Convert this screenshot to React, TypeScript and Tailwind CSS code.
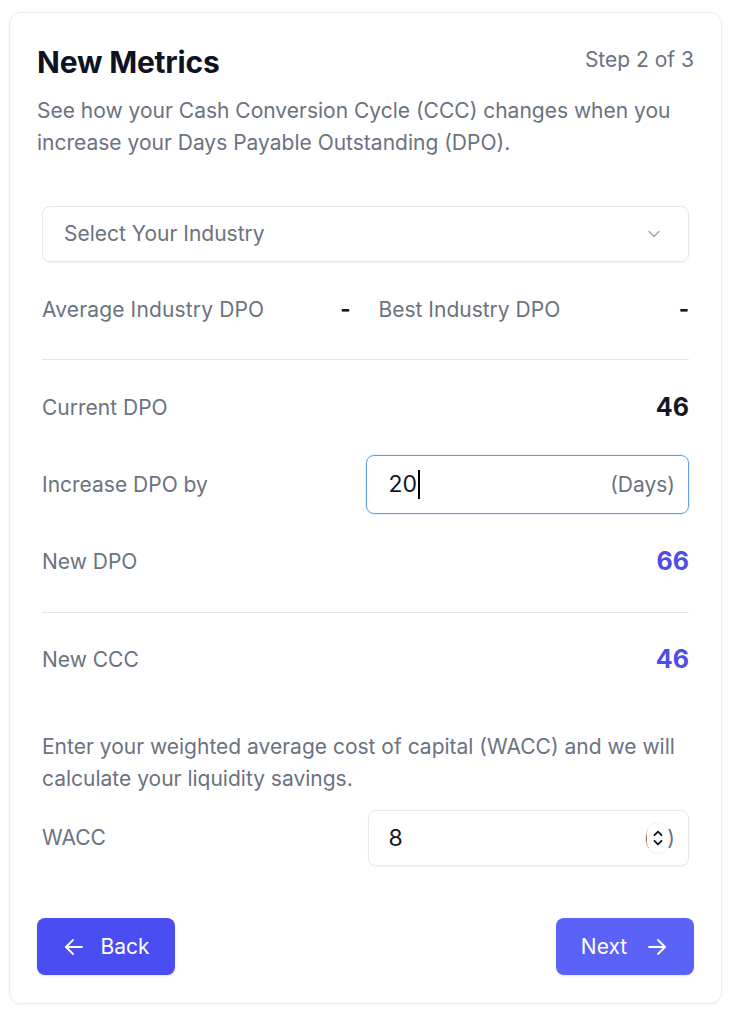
import React from "react";

const font = { fontFamily: "Inter, 'Noto Sans', sans-serif" };

function Row({ label, children }: { label: string; children: React.ReactNode }) {
  return (
    <div className="flex items-center justify-between">
      <span className="text-[21px] text-[#6b7280]">{label}</span>
      {children}
    </div>
  );
}

export default function App() {
  return (
    <div className="bg-white min-h-[1024px] pt-[12px] px-[9px]" style={font}>
      <div className="w-[713px] h-[992px] rounded-xl border border-[#eceef1] shadow-[0_1px_3px_rgba(0,0,0,0.05)] bg-white px-[27px] pt-[31px] flex flex-col">
        <div className="flex items-center justify-between">
          <h1 className="text-[30px] leading-[36px] font-bold text-[#0f1222] tracking-[-0.2px]">New Metrics</h1>
          <span className="text-[21px] text-[#6b7280] -mt-[4px]">Step 2 of 3</span>
        </div>
        <p className="mt-[15px] text-[21px] leading-[32px] text-[#6b7280]">
          See how your Cash Conversion Cycle (CCC) changes when you increase your Days Payable Outstanding (DPO).
        </p>

        <div className="px-[5px] mt-[47px] flex flex-col">
          <div className="h-[56px] rounded-lg border border-[#e5e7eb] shadow-[0_1px_2px_rgba(0,0,0,0.05)] flex items-center justify-between pl-[21px] pr-[24px]">
            <span className="text-[21px] text-[#6b7280]">Select Your Industry</span>
            <svg width="20" height="20" viewBox="0 0 24 24" fill="none" stroke="#9ca3af" strokeWidth="1.6" strokeLinecap="round" strokeLinejoin="round">
              <path d="M6 9l6 6 6-6" />
            </svg>
          </div>

          <div className="grid grid-cols-2 gap-x-[26px] mt-[31px] h-[30px] items-center">
            <div className="flex items-center justify-between">
              <span className="text-[21px] text-[#6b7280] tracking-[0.15px]">Average Industry DPO</span>
              <span className="text-[22px] font-bold text-[#111827] pr-[2px]">-</span>
            </div>
            <div className="flex items-center justify-between">
              <span className="text-[21px] text-[#6b7280]">Best Industry DPO</span>
              <span className="text-[22px] font-bold text-[#111827]">-</span>
            </div>
          </div>

          <div className="border-t border-[#e5e7eb] mt-[36px]" />

          <div className="mt-[33px] h-[30px] flex items-center">
            <div className="w-full">
              <Row label="Current DPO">
                <span className="text-[25px] font-bold text-[#111827]">46</span>
              </Row>
            </div>
          </div>

          <div className="grid grid-cols-2 items-center mt-[32px]">
            <span className="text-[21px] text-[#6b7280]">Increase DPO by</span>
            <div className="h-[59px] rounded-lg border-[1.5px] border-[#64a0e6] shadow-[0_0_0_1px_rgba(100,160,230,0.15)] flex items-center justify-between pl-[22px] pr-[13px]">
              <span className="flex items-center text-[23px] text-[#111827]">
                20<span className="inline-block w-[2px] h-[29px] bg-black ml-[1px]" />
              </span>
              <span className="text-[21px] text-[#6b7280]">(Days)</span>
            </div>
          </div>

          <div className="mt-[33px] h-[30px] flex items-center">
            <div className="w-full">
              <Row label="New DPO">
                <span className="text-[25px] font-bold text-[#4b4ee8]">66</span>
              </Row>
            </div>
          </div>

          <div className="border-t border-[#e5e7eb] mt-[35px]" />

          <div className="mt-[32px] h-[30px] flex items-center">
            <div className="w-full">
              <Row label="New CCC">
                <span className="text-[25px] font-bold text-[#4b4ee8]">46</span>
              </Row>
            </div>
          </div>

          <p className="mt-[56px] text-[21px] leading-[32px] text-[#6b7280]">
            Enter your weighted average cost of capital (WACC) and we will calculate your liquidity savings.
          </p>

          <div className="grid grid-cols-2 items-center mt-[15px]">
            <span className="text-[21px] text-[#6b7280]">WACC</span>
            <div className="ml-[2px] h-[56px] rounded-lg border border-[#e5e7eb] shadow-[0_1px_2px_rgba(0,0,0,0.05)] flex items-center justify-between pl-[20px] pr-[13px]">
              <span className="text-[23px] text-[#111827]">8</span>
              <span className="relative flex items-center text-[21px] text-[#6b7280]">
                (<span className="inline-block w-[16px]" />)
                <span className="absolute left-[3px] top-1/2 -translate-y-1/2 w-[22px] h-[30px] rounded-full bg-white shadow-[0_0_2px_rgba(0,0,0,0.15)] flex items-center justify-center">
                  <svg width="14" height="24" viewBox="0 0 12 20" fill="none" stroke="#111827" strokeWidth="1.6" strokeLinecap="round" strokeLinejoin="round">
                    <path d="M3 7.5l3-3 3 3" />
                    <path d="M3 12.5l3 3 3-3" />
                  </svg>
                </span>
              </span>
            </div>
          </div>
        </div>

        <div className="mt-[52px] flex items-center justify-between">
          <button className="h-[57px] w-[138px] rounded-lg bg-[#4a4df2] text-white text-[21px] flex items-center justify-center gap-[14px] shadow-[0_1px_2px_rgba(0,0,0,0.1)]">
            <svg width="24" height="24" viewBox="0 0 24 24" fill="none" stroke="white" strokeWidth="1.8" strokeLinecap="round" strokeLinejoin="round">
              <path d="M20 12H4" />
              <path d="M11 19l-7-7 7-7" />
            </svg>
            Back
          </button>
          <button className="h-[57px] w-[138px] rounded-lg bg-[#5b62f7] text-white text-[21px] flex items-center justify-center gap-[18px] shadow-[0_1px_2px_rgba(0,0,0,0.1)]">
            Next
            <svg width="24" height="24" viewBox="0 0 24 24" fill="none" stroke="white" strokeWidth="1.8" strokeLinecap="round" strokeLinejoin="round">
              <path d="M4 12h16" />
              <path d="M13 5l7 7-7 7" />
            </svg>
          </button>
        </div>
      </div>
    </div>
  );
}
